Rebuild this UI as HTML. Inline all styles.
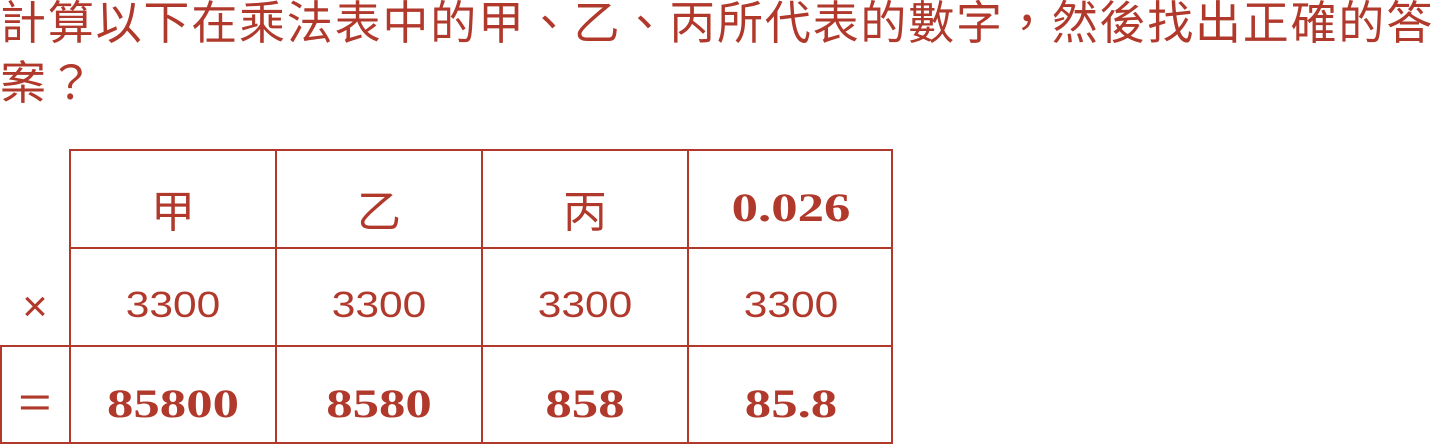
<!DOCTYPE html>
<html><head><meta charset="utf-8"><style>
body{margin:0;width:1435px;height:446px;background:#fff;overflow:hidden;position:relative;color:#b0392c;font-family:"Liberation Sans","Noto Sans CJK TC",sans-serif}
.t{position:absolute;left:0;font-size:46px;line-height:46px;white-space:nowrap;letter-spacing:1.8px}
.l{position:absolute;background:#b0392c}
.c{position:absolute;text-align:center;width:206px}
.c span{display:inline-block}
.cj{font-size:44px;font-family:"Noto Sans CJK TC",sans-serif}
.n{font-size:36px}
.n span{transform:scaleX(1.18)}
.b{font-size:40px;font-weight:bold;font-family:"Liberation Serif",serif}
.b span{transform:scaleX(1.32)}
</style></head><body>
<div class="t" style="top:0">計算以下在乘法表中的甲、乙、丙所代表的數字，然後找出正確的答</div>
<div class="t" style="top:60px">案？</div>
<div class="l" style="left:70px;top:149px;width:823px;height:2px"></div>
<div class="l" style="left:70px;top:247px;width:823px;height:2px"></div>
<div class="l" style="left:0;top:345px;width:893px;height:2px"></div>
<div class="l" style="left:0;top:442px;width:893px;height:2px"></div>
<div class="l" style="left:0;top:345px;width:2px;height:99px"></div>
<div class="l" style="left:69px;top:149px;width:2px;height:295px"></div>
<div class="l" style="left:275px;top:149px;width:2px;height:295px"></div>
<div class="l" style="left:481px;top:149px;width:2px;height:295px"></div>
<div class="l" style="left:687px;top:149px;width:2px;height:295px"></div>
<div class="l" style="left:891px;top:149px;width:2px;height:295px"></div>
<div class="c cj" style="left:70px;top:176px">甲</div>
<div class="c cj" style="left:276px;top:176px">乙</div>
<div class="c cj" style="left:482px;top:176px">丙</div>
<div class="c b" style="left:688px;top:184px"><span>0.026</span></div>
<div class="c" style="left:0;width:70px;top:282px;font-size:44px;font-weight:200">×</div>
<div class="c n" style="left:70px;top:284px"><span>3300</span></div>
<div class="c n" style="left:276px;top:284px"><span>3300</span></div>
<div class="c n" style="left:482px;top:284px"><span>3300</span></div>
<div class="c n" style="left:688px;top:284px"><span>3300</span></div>
<div class="c" style="left:0;width:70px;top:378px;font-size:44px"><span style="display:inline-block;transform:scaleX(1.3)">=</span></div>
<div class="c b" style="left:70px;top:380px"><span>85800</span></div>
<div class="c b" style="left:276px;top:380px"><span>8580</span></div>
<div class="c b" style="left:482px;top:380px"><span>858</span></div>
<div class="c b" style="left:688px;top:380px"><span>85.8</span></div>
</body></html>
